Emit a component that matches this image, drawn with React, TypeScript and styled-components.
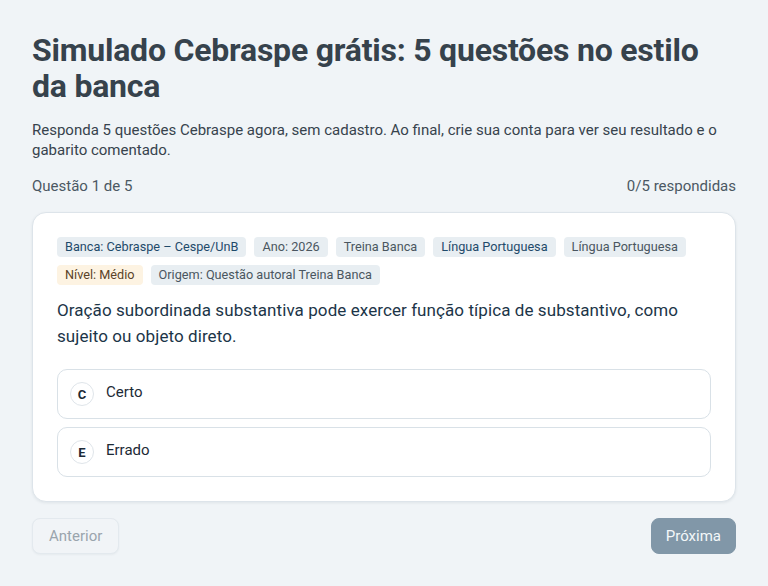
import React from 'react';
import styled, { createGlobalStyle } from 'styled-components';

const GlobalStyle = createGlobalStyle`
	* {
		box-sizing: border-box;
	}
	body {
		margin: 0;
		background: #f0f4f7;
		font-family: Roboto, 'Liberation Sans', sans-serif;
	}
`;

const Page = styled.main`
	padding: 32px 32px 32px;
	display: flex;
	flex-direction: column;
`;

const Title = styled.h1`
	margin: 0;
	font-size: 32px;
	line-height: 36px;
	font-weight: 700;
	letter-spacing: -0.22px;
	color: #36424c;
`;

const Lead = styled.p`
	margin: 16px 0 0;
	font-size: 15px;
	line-height: 20px;
	color: #37434d;
`;

const Progress = styled.div`
	margin-top: 16px;
	display: flex;
	justify-content: space-between;
	font-size: 15px;
	line-height: 20px;
	color: #4b5863;
`;

const Card = styled.section`
	margin-top: 16px;
	background: #fff;
	border: 1px solid #dde4ea;
	border-radius: 14px;
	box-shadow: 0 1px 3px rgba(30, 50, 70, 0.08);
	padding: 24px;
`;

const Tags = styled.div`
	display: flex;
	flex-wrap: wrap;
	gap: 8px;
`;

const Tag = styled.span<{ $tone?: 'blue' | 'warn' }>`
	height: 20px;
	padding: 0 8px;
	border-radius: 4px;
	font-size: 12.7px;
	line-height: 20px;
	background: ${({ $tone }) => ($tone === 'warn' ? '#fdf3e2' : '#e8eef2')};
	color: ${({ $tone }) => ($tone === 'blue' ? '#1f4a6a' : $tone === 'warn' ? '#5a4228' : '#4a5660')};
`;

const Statement = styled.p`
	margin: 12px 0 0;
	font-size: 17px;
	line-height: 26px;
	letter-spacing: 0.08px;
	color: #1c3548;
`;

const Options = styled.div`
	margin-top: 20px;
	display: flex;
	flex-direction: column;
	gap: 8px;
`;

const Option = styled.button`
	height: 50px;
	display: flex;
	align-items: center;
	gap: 12px;
	padding: 0 12px;
	background: #fff;
	border: 1px solid #d9e1e7;
	border-radius: 10px;
	font-family: inherit;
	cursor: pointer;
	text-align: left;
`;

const Letter = styled.span`
	width: 24px;
	height: 24px;
	border-radius: 50%;
	border: 1px solid #dfe5ea;
	display: flex;
	align-items: center;
	justify-content: center;
	font-size: 13px;
	font-weight: 700;
	color: #1c2a36;
`;

const OptionText = styled.span`
	font-size: 15px;
	color: #1c2a36;
	margin-top: -4px;
`;

const Footer = styled.div`
	margin-top: 16px;
	display: flex;
	justify-content: space-between;
`;

const NavButton = styled.button<{ $primary?: boolean }>`
	height: 36px;
	padding: 0 ${({ $primary }) => ($primary ? '14px' : '16px')};
	border-radius: 8px;
	font-family: inherit;
	font-size: 15px;
	border: 1px solid ${({ $primary }) => ($primary ? '#8197a8' : '#e3e9ee')};
	background: ${({ $primary }) => ($primary ? '#8197a8' : '#f1f4f7')};
	color: ${({ $primary }) => ($primary ? '#f4f7f9' : '#9aa4ad')};
	box-shadow: ${({ $primary }) => ($primary ? 'none' : '0 1px 2px rgba(30,50,70,0.05)')};
`;

const tags: { label: string; tone?: 'blue' | 'warn' }[] = [
	{ label: 'Banca: Cebraspe – Cespe/UnB', tone: 'blue' },
	{ label: 'Ano: 2026' },
	{ label: 'Treina Banca' },
	{ label: 'Língua Portuguesa', tone: 'blue' },
	{ label: 'Língua Portuguesa' },
	{ label: 'Nível: Médio', tone: 'warn' },
	{ label: 'Origem: Questão autoral Treina Banca' },
];

const App = () => {
	return (
		<>
			<GlobalStyle />
			<Page>
				<Title>Simulado Cebraspe grátis: 5 questões no estilo da banca</Title>
				<Lead>
					Responda 5 questões Cebraspe agora, sem cadastro. Ao final, crie sua conta para ver seu resultado e o
					gabarito comentado.
				</Lead>
				<Progress>
					<span>Questão 1 de 5</span>
					<span>0/5 respondidas</span>
				</Progress>
				<Card>
					<Tags>
						{tags.map((t, i) => (
							<Tag key={i} $tone={t.tone}>
								{t.label}
							</Tag>
						))}
					</Tags>
					<Statement>
						Oração subordinada substantiva pode exercer função típica de substantivo, como sujeito ou objeto
						direto.
					</Statement>
					<Options>
						<Option>
							<Letter>C</Letter>
							<OptionText>Certo</OptionText>
						</Option>
						<Option>
							<Letter>E</Letter>
							<OptionText>Errado</OptionText>
						</Option>
					</Options>
				</Card>
				<Footer>
					<NavButton disabled>Anterior</NavButton>
					<NavButton $primary>Próxima</NavButton>
				</Footer>
			</Page>
		</>
	);
};

export default App;
